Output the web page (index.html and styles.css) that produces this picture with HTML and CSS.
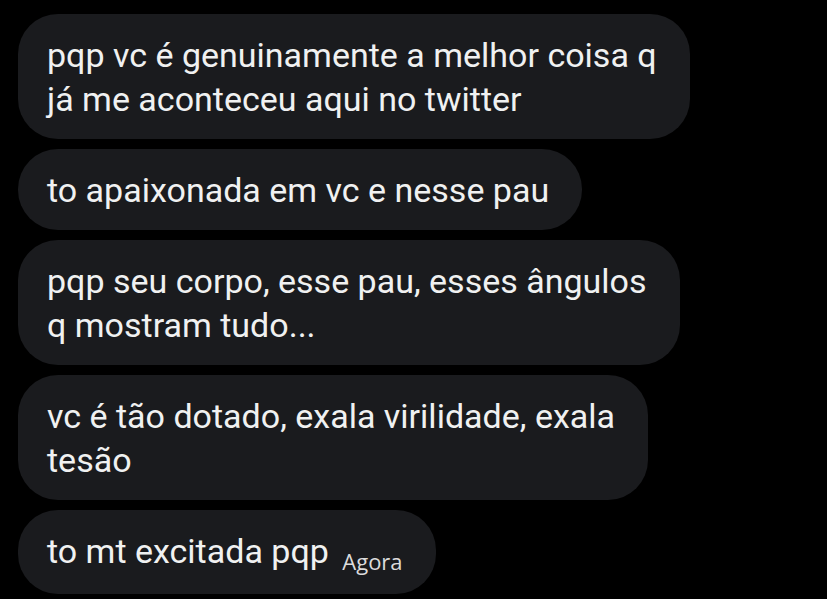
FILE: index.html
```html
<!DOCTYPE html>
<html lang="pt">
<head>
<meta charset="utf-8">
<link rel="stylesheet" href="styles.css">
</head>
<body>
<div class="chat">
  <div class="bubble">pqp vc é genuinamente a melhor coisa q<br>já me aconteceu aqui no twitter</div>
  <div class="bubble">to apaixonada em vc e nesse pau</div>
  <div class="bubble">pqp seu corpo, esse pau, esses ângulos<br>q mostram tudo...</div>
  <div class="bubble">vc é tão dotado, exala virilidade, exala<br>tesão</div>
  <div class="bubble">to mt excitada pqp <span class="time">Agora</span></div>
</div>
</body>
</html>
```
FILE: styles.css
```css
html, body {
  margin: 0;
  padding: 0;
  background: #000;
  overflow: hidden;
}
.chat {
  display: flex;
  flex-direction: column;
  align-items: flex-start;
  gap: 10px;
  padding: 14px 0 0 18px;
}
.bubble {
  background: #1a1b1e;
  color: #f0f1f1;
  font-family: Roboto, "Liberation Sans", sans-serif;
  font-size: 34px;
  line-height: 44px;
  padding: 19px 33px 18px 29px;
  border-radius: 40px;
}
.time {
  font-family: "Open Sans", "Liberation Sans", sans-serif;
  font-size: 22px;
  color: #dcdcdc;
  margin-left: 5px;
  position: relative;
  top: 7px;
}
```
